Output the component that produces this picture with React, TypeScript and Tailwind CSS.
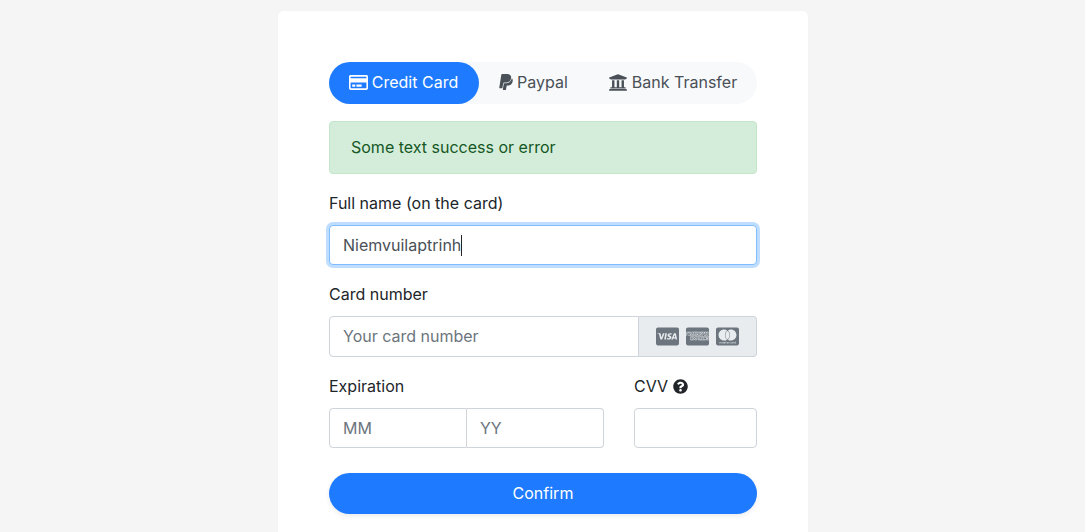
import { FaCcAmex, FaCcMastercard, FaCcVisa, FaPaypal, FaQuestionCircle, FaRegCreditCard, FaUniversity } from "react-icons/fa"

export default function App() {
  return (
    <div className="h-[532px] overflow-hidden bg-[#f5f5f5] pt-[11px] font-['Inter',sans-serif] text-[16px] leading-[24px] text-[#212529]">
      <div className="ml-[278px] w-[530px] rounded-t-[5px] bg-white px-[51px] pt-[51px] pb-[40px] shadow-[0_0_1px_rgba(0,0,0,0.06)]">
        <div className="flex h-[42px] items-center rounded-full bg-[#f8f9fa] text-[#495057]">
          <button className="flex h-[42px] w-[150px] items-center justify-center gap-[4px] rounded-full bg-[#1e7bff] pr-[1px] pb-[2px] text-white">
            <FaRegCreditCard className="h-[17px] w-[19px]" />
            Credit Card
          </button>
          <button className="flex h-[42px] w-[109px] items-center justify-center gap-[4px] pb-[2px]">
            <FaPaypal className="h-[18px] w-[14px]" />
            Paypal
          </button>
          <button className="flex h-[42px] flex-1 items-center justify-center gap-[4px] pb-[2px]">
            <FaUniversity className="h-[19px] w-[20px]" />
            Bank Transfer
          </button>
        </div>

        <div className="mt-[17px] flex h-[53px] items-center rounded-[4px] border border-[#c3e6cb] bg-[#d4edda] px-[21px] pb-[1px] text-[#155724]">
          Some text success or error
        </div>

        <label className="mt-[17px] block">Full name (on the card)</label>
        <div className="mt-[10px] flex h-[40px] items-center rounded-[4px] border border-[#80bdff] bg-white px-[13px] text-[#495057] shadow-[0_0_0_3px_rgba(0,123,255,0.25)]">
          Niemvuilaptrinh
          <span className="h-[21px] w-px bg-[#212529]" />
        </div>

        <label className="mt-[17px] block">Card number</label>
        <div className="mt-[10px] flex h-[41px]">
          <div className="flex flex-1 items-center rounded-l-[4px] border border-[#ced4da] px-[13px] pb-[1px] text-[#6c757d]">
            Your card number
          </div>
          <div className="flex w-[118px] items-center justify-center gap-[7px] rounded-r-[4px] border border-l-0 border-[#ced4da] bg-[#e9ecef] text-[#6c757d]">
            <FaCcVisa className="h-[21px] w-[23px]" />
            <FaCcAmex className="h-[21px] w-[23px]" />
            <FaCcMastercard className="h-[21px] w-[23px]" />
          </div>
        </div>

        <div className="mt-[17px] flex gap-[30px]">
          <div className="w-[275px]">
            <label className="block">Expiration</label>
            <div className="mt-[10px] flex h-[40px] text-[#6c757d]">
              <div className="flex w-[138px] items-center rounded-l-[4px] border border-[#ced4da] px-[13px]">MM</div>
              <div className="flex flex-1 items-center rounded-r-[4px] border border-l-0 border-[#ced4da] px-[13px]">YY</div>
            </div>
          </div>
          <div className="flex-1">
            <label className="flex items-center gap-[5px]">
              CVV
              <FaQuestionCircle className="h-[15px] w-[15px]" />
            </label>
            <div className="mt-[10px] h-[40px] rounded-[4px] border border-[#ced4da]" />
          </div>
        </div>

        <button className="mt-[25px] flex h-[41px] w-full items-center justify-center rounded-full bg-[#1e7bff] pb-[1px] text-white shadow-[0_2px_5px_rgba(0,0,0,0.08)]">
          Confirm
        </button>
      </div>
    </div>
  )
}
